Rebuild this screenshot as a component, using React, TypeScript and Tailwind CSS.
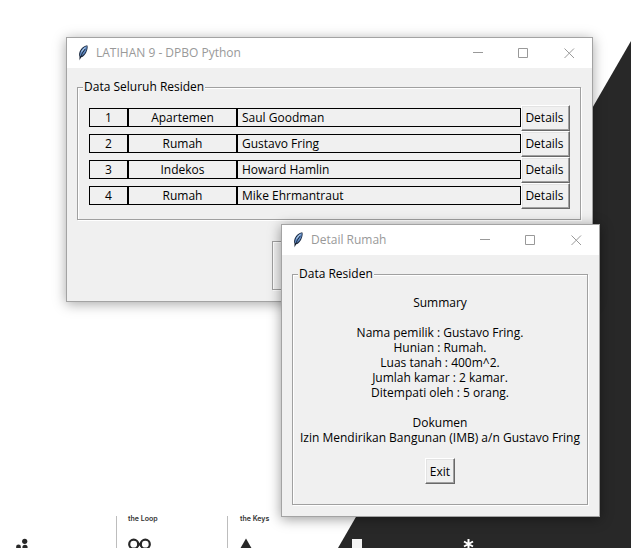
import type { ReactNode } from 'react';

type Resident = { no: number; kind: string; name: string };

const residents: Resident[] = [
  { no: 1, kind: 'Apartemen', name: 'Saul Goodman' },
  { no: 2, kind: 'Rumah', name: 'Gustavo Fring' },
  { no: 3, kind: 'Indekos', name: 'Howard Hamlin' },
  { no: 4, kind: 'Rumah', name: 'Mike Ehrmantraut' },
];

const bevel =
  'border border-t-white border-l-white border-r-[#696969] border-b-[#696969] bg-[#f0f0f0] shadow-[inset_-1px_-1px_0_#a0a0a0,inset_1px_1px_0_#e3e3e3]';

const etched = 'border border-[#a0a0a0] shadow-[1px_1px_0_#fff,inset_1px_1px_0_#fff]';

function Feather() {
  return (
    <svg className="h-4 w-4 shrink-0" viewBox="0 0 16 16" aria-hidden="true">
      <path d="M12.2 0.2C9 0.6 6.2 3 4.8 6.3C4 8.4 3.8 10 4.5 11.8L4.6 15.4L5.8 12.6C8.6 11.6 11 9 12 5.4C12.7 3.2 13 1.6 12.2 0.2Z" fill="#1c2a40" />
      <path d="M11.9 1C8.8 2 6.4 4.6 5.3 7.8L4.9 10.4L5.6 11.6C8.5 10.4 10.6 7.8 11.5 4.6Z" fill="#5f8ac4" />
      <path d="M11.2 1.6C8.6 2.9 6.6 5.3 5.9 7.8L9.4 4.2Z" fill="#b2cdea" />
      <path d="M10.2 4L7.4 8L5 13.4" stroke="#0c1118" strokeWidth="0.8" fill="none" />
    </svg>
  );
}

function TitleBar({ title }: { title: string }) {
  const control = 'flex h-[30px] w-[46px] items-center justify-center';
  return (
    <header className="flex h-[30px] items-center bg-white pl-2 text-[#999]">
      <Feather />
      <h1 className="ml-[5px] flex-1 whitespace-nowrap text-[12px]">{title}</h1>
      <button className={control} aria-label="Minimize">
        <svg width="11" height="11" viewBox="0 0 11 11"><path d="M1 4.5H11" stroke="#999" /></svg>
      </button>
      <button className={control} aria-label="Maximize">
        <svg width="11" height="11" viewBox="0 0 11 11"><path d="M0.5 0.5H9.5V9.5H0.5Z" stroke="#999" fill="none" /></svg>
      </button>
      <button className={control} aria-label="Close">
        <svg width="11" height="11" viewBox="0 0 11 11"><path d="M0.5 0.5L10 10M10 0.5L0.5 10" stroke="#999" /></svg>
      </button>
    </header>
  );
}

function Group({ label, children }: { label: string; children: ReactNode }) {
  return (
    <fieldset className={`min-w-0 ${etched}`}>
      <legend className="ml-[5px] h-4 bg-[#f0f0f0] px-px leading-4">{label}</legend>
      {children}
    </fieldset>
  );
}

function Wallpaper() {
  return (
    <div className="absolute inset-0" aria-hidden="true">
      <svg className="absolute top-0 left-0" width="631" height="548" viewBox="0 0 631 548">
        <path d="M631 41V548H338Z" fill="#282828" />
        <path d="M116.5 516V548M227.5 516V548" stroke="#bdbdbd" />
        <g fill="#282828">
          <circle cx="24.7" cy="541.3" r="2.6" />
          <circle cx="18.5" cy="547" r="2.4" />
          <circle cx="25" cy="547.3" r="2.6" />
          <path d="M246 538.5L252 549H240Z" />
        </g>
        <g fill="none" stroke="#282828" strokeWidth="2.2">
          <circle cx="133.7" cy="544.2" r="4.5" />
          <circle cx="145.3" cy="544.2" r="4.5" />
          <path d="M137.5 542L141.5 546.4M141.5 542L137.5 546.4" strokeWidth="1.6" />
        </g>
        <path d="M352 539H362V548H352Z" fill="#f4f4f4" />
        <path d="M468.5 539V549M464 541.5L473 546.5M473 541.5L464 546.5" stroke="#fff" strokeWidth="2" />
      </svg>
      <span className="absolute top-[514px] left-[128px] font-['Inter'] text-[7px] leading-[10px] font-semibold whitespace-nowrap text-[#333]">the Loop</span>
      <span className="absolute top-[514px] left-[240px] font-['Inter'] text-[7px] leading-[10px] font-semibold whitespace-nowrap text-[#333]">the Keys</span>
    </div>
  );
}

function ResidentsWindow() {
  const cell = 'mb-px h-[19px] border border-black leading-[18px]';
  return (
    <section className="absolute top-[37px] left-[66px] w-[527px] border border-[#a3a3a3] bg-[#f0f0f0] shadow-[0_2px_12px_rgba(0,0,0,0.35)]">
      <TitleBar title="LATIHAN 9 - DPBO Python" />
      <div className="pt-[11px] pr-[11px] pb-[11px] pl-[10px]">
        <Group label="Data Seluruh Residen">
          <div className="pt-[10px] pr-[10px] pb-[10px] pl-[11px]">
            <table className="w-full table-fixed border-collapse">
              <colgroup>
                <col className="w-[39px]" />
                <col className="w-[109px]" />
                <col />
                <col className="w-[49px]" />
              </colgroup>
              <tbody>
                {residents.map((r) => (
                  <tr key={r.no} className="h-[26px]">
                    <td className="p-0"><div className={`${cell} text-center`}>{r.no}</div></td>
                    <td className="p-0"><div className={`${cell} text-center`}>{r.kind}</div></td>
                    <td className="p-0"><div className={`${cell} pl-1`}>{r.name}</div></td>
                    <td className="p-0"><button className={`block h-[26px] w-full pr-[2px] ${bevel}`}>Details</button></td>
                  </tr>
                ))}
              </tbody>
            </table>
          </div>
        </Group>
        <div className={`mx-auto mt-[21px] h-[49px] w-[115px] ${etched}`} />
      </div>
    </section>
  );
}

function DetailWindow() {
  return (
    <section className="absolute top-[224px] left-[281px] w-[319px] border border-[#a3a3a3] bg-[#f0f0f0] shadow-[0_2px_12px_rgba(0,0,0,0.4)]">
      <TitleBar title="Detail Rumah" />
      <div className="pt-[11px] pr-[11px] pb-[11px] pl-[10px]">
        <Group label="Data Residen">
          <div className="pt-[13px] pb-5 text-center leading-[15px] whitespace-nowrap">
            <h2>Summary</h2>
            <div className="mt-[15px]">
              <p>Nama pemilik : Gustavo Fring.</p>
              <p>Hunian : Rumah.</p>
              <p>Luas tanah : 400m^2.</p>
              <p>Jumlah kamar : 2 kamar.</p>
              <p>Ditempati oleh : 5 orang.</p>
            </div>
            <h2 className="mt-[15px]">Dokumen</h2>
            <p>Izin Mendirikan Bangunan (IMB) a/n Gustavo Fring</p>
            <button className={`mt-[13px] h-[26px] w-[30px] ${bevel}`}>Exit</button>
          </div>
        </Group>
      </div>
    </section>
  );
}

export default function App() {
  return (
    <main className="relative h-screen overflow-hidden bg-white font-['Open_Sans','Noto_Sans',sans-serif] text-[12px] text-black">
      <Wallpaper />
      <ResidentsWindow />
      <DetailWindow />
    </main>
  );
}
